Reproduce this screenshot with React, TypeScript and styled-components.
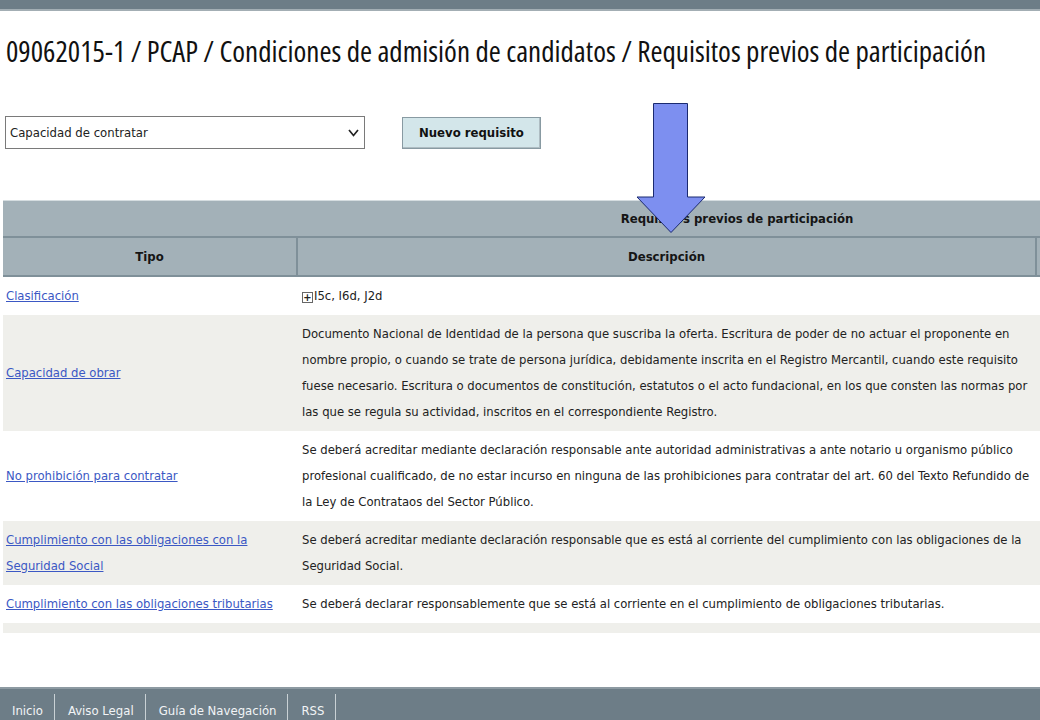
import { Fragment } from 'react';
import styled, { createGlobalStyle } from 'styled-components';

const GlobalStyle = createGlobalStyle`
  html, body {
    margin: 0;
    padding: 0;
    background: #ffffff;
  }
  body {
    font-family: 'DejaVu Sans Condensed', 'DejaVu Sans', Verdana, sans-serif;
    font-size: 12.95px;
    color: #222;
    overflow: hidden;
  }
`;

const Page = styled.div`
  position: relative;
  width: 1040px;
  height: 720px;
  overflow: hidden;
  display: flex;
  flex-direction: column;
`;

const TopBar = styled.div`
  height: 9px;
  background: #6d7d87;
  border-bottom: 2px solid #a3aeb4;
  flex-shrink: 0;
`;

const Title = styled.h1`
  margin: 20px 0 0 6px;
  font-family: 'Open Sans', 'DejaVu Sans Condensed', sans-serif;
  font-stretch: 75%;
  font-size: 29.1px;
  font-weight: 500;
  line-height: 40px;
  color: #111;
  white-space: nowrap;
`;

const Toolbar = styled.div`
  display: flex;
  align-items: center;
  gap: 37px;
  margin: 45px 0 0 5px;
`;

const SelectBox = styled.div`
  width: 360px;
  height: 33px;
  border: 1px solid #7a7a7a;
  display: flex;
  align-items: center;
  justify-content: space-between;
  padding: 0 5px 0 4px;
  box-sizing: border-box;
  font-size: 13px;
`;

const Button = styled.button`
  height: 32px;
  padding: 0 16px;
  background: #d3e6ea;
  border: 1px solid #889aa2;
  box-shadow: inset -1px -1px 0 #aebcc2;
  font-family: inherit;
  font-weight: bold;
  font-size: 13px;
  color: #111;
`;

const Table = styled.div`
  margin: 51px 0 0 3px;
  width: 1468px;
  display: grid;
  grid-template-columns: 295px 739px 434px;
`;

const HeadCell = styled.div<{ $span?: number; $divider?: boolean }>`
  grid-column: span ${p => p.$span ?? 1};
  background: #a3b1b8;
  height: 39px;
  display: flex;
  align-items: center;
  justify-content: center;
  font-weight: bold;
  font-size: 13px;
  color: #151515;
  border-bottom: 2px solid #7f9099;
  border-right: ${p => (p.$divider ? '2px solid #7f9099' : 'none')};
  box-sizing: border-box;
`;

const HeadTop = styled(HeadCell)`
  border-top: 1px solid #d5dde0;
  height: 38px;
`;

const Cell = styled.div<{ $alt: boolean; $wide?: boolean }>`
  grid-column: span ${p => (p.$wide ? 2 : 1)};
  background: ${p => (p.$alt ? '#efefeb' : '#ffffff')};
  padding: 6px 0 6px 3px;
  line-height: 26px;
  display: flex;
  align-items: center;
  box-sizing: border-box;
`;

const DescCell = styled(Cell)`
  padding-left: 4px;
`;

const Desc = styled.div`
  width: 735px;
`;

const TypeLink = styled.a`
  color: #3b58c4;
  text-decoration: underline;
`;

const PlusBox = styled.span`
  display: inline-flex;
  align-items: center;
  justify-content: center;
  width: 9px;
  height: 9px;
  border: 1px solid #666;
  font-size: 11px;
  font-weight: bold;
  line-height: 1;
  margin-right: 1px;
  vertical-align: -1px;
`;

const EndRow = styled.div`
  grid-column: span 3;
  height: 10px;
  background: #efefeb;
`;

const Spacer = styled.div`
  flex: 1;
`;

const Footer = styled.div`
  background: #6d7d87;
  border-top: 2px solid #8d9aa2;
  height: 31px;
  display: flex;
  align-items: flex-end;
  flex-shrink: 0;
`;

const FooterLink = styled.span`
  color: #f2f4f6;
  font-size: 13px;
  padding: 0 11px 0 13px;
  border-right: 1px solid #c9d1d5;
  line-height: 18px;
  height: 26px;
  display: flex;
  align-items: flex-end;
  &:first-child {
    padding-left: 12px;
  }
`;

const Arrow = styled.svg`
  position: absolute;
  left: 636px;
  top: 103px;
`;

const rows = [
  { tipo: 'Clasificación', desc: 'I5c, I6d, J2d', plus: true },
  {
    tipo: 'Capacidad de obrar',
    desc: 'Documento Nacional de Identidad de la persona que suscriba la oferta. Escritura de poder de no actuar el proponente en nombre propio, o cuando se trate de persona jurídica, debidamente inscrita en el Registro Mercantil, cuando este requisito fuese necesario. Escritura o documentos de constitución, estatutos o el acto fundacional, en los que consten las normas por las que se regula su actividad, inscritos en el correspondiente Registro.',
  },
  {
    tipo: 'No prohibición para contratar',
    desc: 'Se deberá acreditar mediante declaración responsable ante autoridad administrativas a ante notario u organismo público profesional cualificado, de no estar incurso en ninguna de las prohibiciones para contratar del art. 60 del Texto Refundido de la Ley de Contrataos del Sector Público.',
  },
  {
    tipo: 'Cumplimiento con las obligaciones con la Seguridad Social',
    desc: 'Se deberá acreditar mediante declaración responsable que es está al corriente del cumplimiento con las obligaciones de la Seguridad Social.',
  },
  {
    tipo: 'Cumplimiento con las obligaciones tributarias',
    desc: 'Se deberá declarar responsablemente que se está al corriente en el cumplimiento de obligaciones tributarias.',
  },
];

export default function App() {
  return (
    <Page>
      <GlobalStyle />
      <TopBar />
      <Title>09062015-1 / PCAP / Condiciones de admisión de candidatos / Requisitos previos de participación</Title>
      <Toolbar>
        <SelectBox>
          <span>Capacidad de contratar</span>
          <svg width="11" height="8" viewBox="0 0 11 8">
            <path d="M1 1 L5.5 6.5 L10 1" fill="none" stroke="#222" strokeWidth="1.7" />
          </svg>
        </SelectBox>
        <Button>Nuevo requisito</Button>
      </Toolbar>
      <Table>
        <HeadTop $span={3}>Requisitos previos de participación</HeadTop>
        <HeadCell $divider>Tipo</HeadCell>
        <HeadCell $divider>Descripción</HeadCell>
        <HeadCell />
        {rows.map((r, i) => (
          <Fragment key={r.tipo}>
            <Cell $alt={i % 2 === 1}>
              <TypeLink href="#">{r.tipo}</TypeLink>
            </Cell>
            <DescCell $alt={i % 2 === 1} $wide>
              <Desc>
                {r.plus && <PlusBox>+</PlusBox>}
                {r.desc}
              </Desc>
            </DescCell>
          </Fragment>
        ))}
        <EndRow />
      </Table>
      <Spacer />
      <Footer>
        <FooterLink>Inicio</FooterLink>
        <FooterLink>Aviso Legal</FooterLink>
        <FooterLink>Guía de Navegación</FooterLink>
        <FooterLink>RSS</FooterLink>
      </Footer>
      <Arrow width="70" height="132" viewBox="0 0 70 132">
        <path
          d="M17.5 0.5 H51.5 V94 H69 L35 129.5 L1 94 H17.5 Z"
          fill="#7d8ff0"
          stroke="#1b2a70"
          strokeWidth="1"
        />
      </Arrow>
    </Page>
  );
}
